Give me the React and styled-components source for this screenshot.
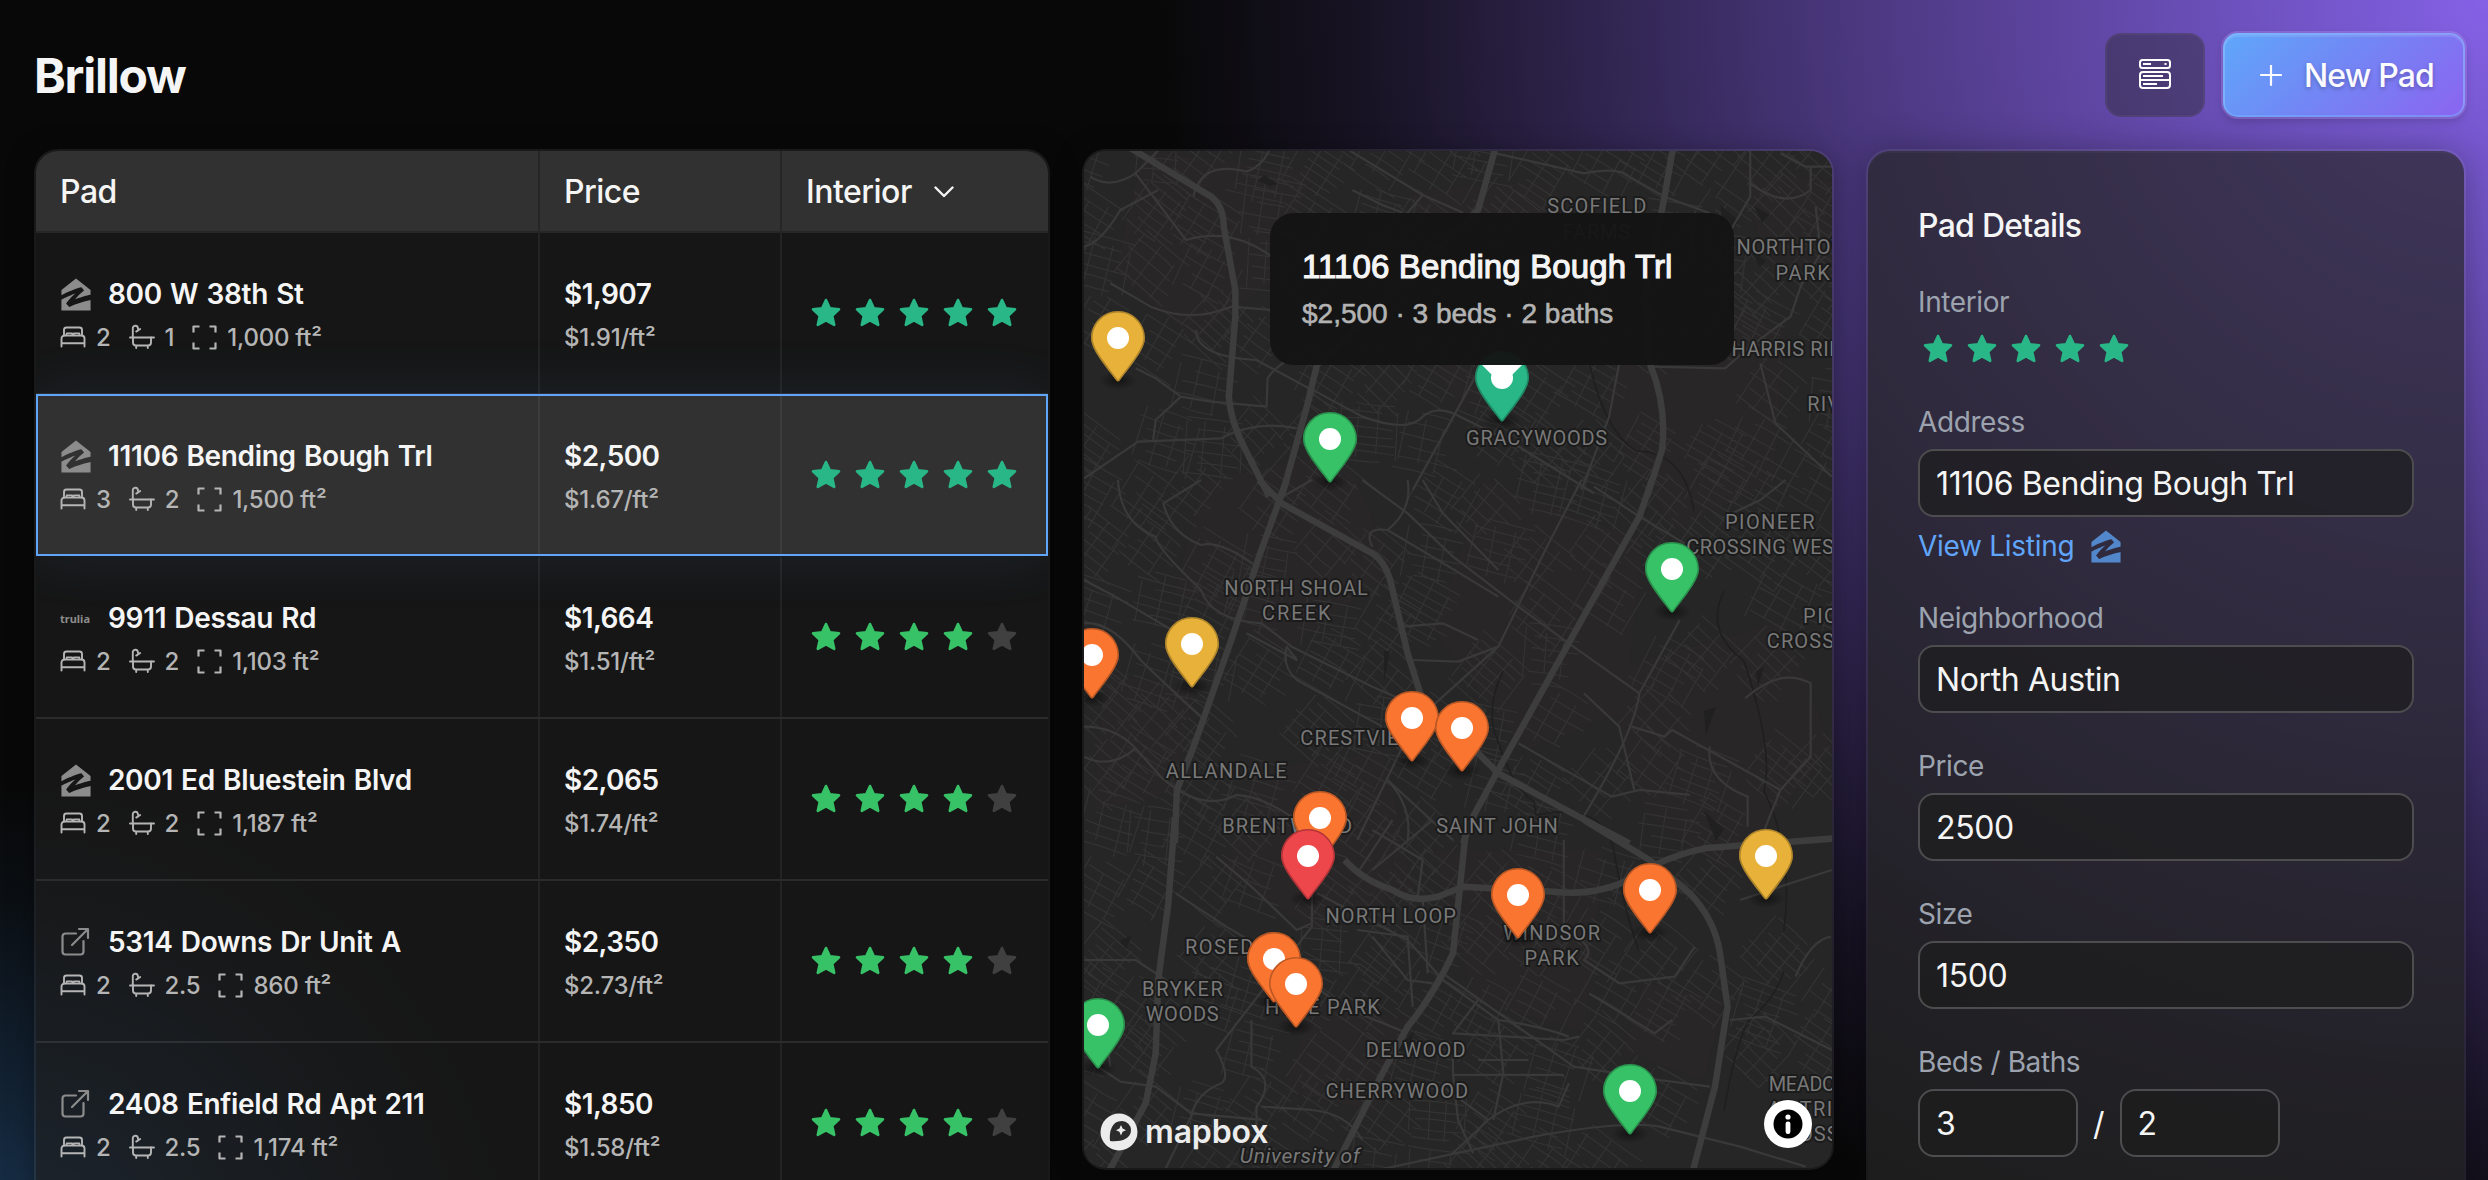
import React from "react";
import styled, { createGlobalStyle } from "styled-components";
import { SiZillow } from "react-icons/si";

const GlobalStyle = createGlobalStyle`
  * { box-sizing: border-box; }
  body {
    margin: 0;
    background: #070707;
    color: #f5f5f5;
    font-family: Inter, "Noto Sans", sans-serif;
    -webkit-font-smoothing: antialiased;
  }
`;

const Page = styled.div`
  height: 1180px;
  overflow: hidden;
  padding: 0 24px 0 36px;
  background:
    radial-gradient(circle at 100% 0, rgba(139, 102, 242, 0.95) 0, rgba(139, 102, 242, 0.5) 640px, rgba(139, 102, 242, 0.12) 1120px, transparent 1330px),
    radial-gradient(circle at 0 1300px, rgba(56, 130, 210, 0.4) 0, rgba(56, 130, 210, 0.22) 200px, rgba(56, 130, 210, 0.06) 400px, transparent 520px),
    #080808;
`;

const Header = styled.header`
  height: 151px;
  display: flex;
  align-items: flex-start;
  justify-content: space-between;
  padding: 33px 0 0;
`;

const Brand = styled.h1`
  margin: 0 0 0 -2px;
  font-size: 48px;
  line-height: 86px;
  font-weight: 700;
  letter-spacing: -0.026em;
`;

const Actions = styled.div`
  display: flex;
  gap: 18px;
  margin-right: -1px;
`;

const IconButton = styled.button`
  width: 100px;
  height: 84px;
  display: grid;
  place-items: center;
  padding: 0;
  border: 2px solid rgba(255, 255, 255, 0.04);
  border-radius: 16px;
  background: rgba(38, 38, 38, 0.42);
  color: #fff;
`;

const PrimaryButton = styled.button`
  width: 242px;
  height: 84px;
  display: flex;
  align-items: center;
  gap: 22px;
  padding: 2px 0 0 37px;
  border: 0;
  border-radius: 15px;
  color: #fafaff;
  background: linear-gradient(135deg, #60a5fa 4%, #7484f4 50%, #8b64f0 100%);
  box-shadow:
    0 0 0 2px rgba(190, 160, 255, 0.3),
    inset 0 2px 0 2px rgba(255, 255, 255, 0.1),
    inset 0 0 0 2px rgba(120, 180, 255, 0.5),
    0 4px 10px rgba(0, 0, 0, 0.2);
  font: 500 32px/1 Inter, sans-serif;
  letter-spacing: -0.026em;
  text-shadow: 0 2px 4px rgba(0, 0, 0, 0.25);
`;

const Columns = styled.main`
  display: grid;
  grid-template-columns: 1012px 748px 596px;
  gap: 36px;
  align-items: start;
`;

const panelRing = `
  box-shadow:
    0 0 0 2px rgba(255, 255, 255, 0.08),
    0 4px 30px rgba(0, 0, 0, 0.35);
`;

const Table = styled.section`
  height: 1100px;
  overflow: hidden;
  border-radius: 22px 22px 0 0;
  background: rgba(30, 30, 30, 0.66);
  ${panelRing}
`;

const rowGrid = `
  display: grid;
  grid-template-columns: 504px 242px 266px;
`;

const TableHead = styled.div`
  ${rowGrid}
  height: 82px;
  background: #313131;
  border-bottom: 2px solid #262626;
`;

const HeadCell = styled.div`
  display: flex;
  align-items: center;
  gap: 22px;
  padding: 1px 0 0 24px;
  font-size: 32px;
  font-weight: 500;
  letter-spacing: -0.016em;
  border-right: ${(p) => (p.$last ? "0" : "2px solid #262626")};
`;

const Row = styled.div`
  ${rowGrid}
  position: relative;
  height: 162px;
  border-bottom: 2px solid rgba(255, 255, 255, 0.09);
  ${(p) =>
    p.$selected &&
    `
    margin: -1px 0 1px;
    background: #313131;
    border-bottom: 0;
    outline: 2px solid #60a5fa;
    outline-offset: -2px;
    box-shadow: 0 0 60px rgba(96, 165, 250, 0.1);
  `}
`;

const Cell = styled.div`
  display: flex;
  flex-direction: column;
  justify-content: center;
  padding: ${(p) => (p.$last ? "0 0 0 24px" : "4px 0 0 24px")};
  border-right: ${(p) => (p.$last ? "0" : "2px solid rgba(255, 255, 255, 0.06)")};
`;

const Primary = styled.div`
  display: flex;
  align-items: center;
  gap: 16px;
  height: 44px;
  font-size: 28px;
  font-weight: 600;
  letter-spacing: ${(p) => (p.$figure ? "-0.02em" : "-0.012em")};
  word-spacing: 1.5px;
  white-space: nowrap;
`;

const Secondary = styled.div`
  display: flex;
  align-items: center;
  height: 42px;
  font-size: 24px;
  font-weight: 500;
  letter-spacing: -0.01em;
  color: #b5b5b5;
  white-space: nowrap;
`;

const Stat = styled.span`
  display: flex;
  align-items: center;
  gap: 10px;
  margin-right: 18px;
`;

const Source = styled.span`
  width: 32px;
  display: flex;
  align-items: center;
  color: ${(p) => (p.$accent ? "#5288cb" : "#8c8c8c")};
`;

const TruliaMark = styled.span`
  font: 700 11px/1 "Noto Sans", sans-serif;
  letter-spacing: 0;
`;

const Stars = styled.div`
  display: flex;
  align-items: center;
  gap: 14px;
  padding-left: ${(p) => p.$inset || 0}px;
  height: 40px;
`;

const MapPanel = styled.section`
  position: relative;
  height: 1017px;
  overflow: hidden;
  border-radius: 22px;
  background: #262626;
  ${panelRing}
`;

const MapCanvas = styled.svg`
  display: block;
`;

const Marker = styled.svg`
  position: absolute;
  width: 54px;
  height: 82px;
  overflow: visible;
`;

const Popup = styled.div`
  position: absolute;
  left: 186px;
  top: 62px;
  width: 464px;
  height: 152px;
  padding: 31px 32px;
  border-radius: 24px;
  background: rgba(20, 20, 20, 0.96);
  font-family: "Liberation Sans", Arial, sans-serif;
  &::after {
    content: "";
    position: absolute;
    top: 152px;
    left: 212px;
    border: 20px solid transparent;
    border-top-color: #fff;
    border-bottom: 0;
  }
`;

const PopupTitle = styled.div`
  font-size: 33px;
  line-height: 46px;
  white-space: nowrap;
  letter-spacing: 0.13px;
  -webkit-text-stroke: 1.1px #f5f5f5;
`;

const PopupMeta = styled.div`
  font-size: 28px;
  line-height: 48px;
  white-space: nowrap;
  color: #b3b3b3;
  -webkit-text-stroke: 0.6px #b3b3b3;
`;

const MapLogo = styled.div`
  position: absolute;
  left: 16px;
  bottom: 14px;
  display: flex;
  align-items: center;
  gap: 7px;
  color: #ececec;
  font: 600 32px/44px Inter, sans-serif;
  letter-spacing: -0.005em;
`;

const InfoButton = styled.div`
  position: absolute;
  right: 20px;
  bottom: 20px;
  width: 48px;
  height: 48px;
  border-radius: 50%;
  background: #fff;
  display: grid;
  place-items: center;
`;

const Details = styled.section`
  height: 1100px;
  display: flex;
  flex-direction: column;
  gap: 32px;
  padding: 50px;
  border-radius: 22px 22px 0 0;
  background: rgba(38, 38, 38, 0.7);
  box-shadow:
    0 0 0 2px rgba(255, 255, 255, 0.08),
    inset 0 2px 0 rgba(255, 255, 255, 0.03),
    0 0 36px rgba(0, 0, 0, 0.3);
`;

const DetailsTitle = styled.h2`
  margin: 0;
  padding-top: 1px;
  font-size: 32px;
  line-height: 47px;
  font-weight: 500;
  letter-spacing: -0.023em;
`;

const Field = styled.div`
  display: flex;
  flex-direction: column;
  gap: 8px;
`;

const Label = styled.label`
  font-size: 28px;
  line-height: 42px;
  margin-bottom: -2px;
  letter-spacing: -0.014em;
  color: #9ca3af;
`;

const Input = styled.input`
  width: ${(p) => (p.$small ? "160px" : "100%")};
  height: 68px;
  padding: 1px 16px 0;
  border: 2px solid #4d4d4f;
  border-radius: 16px;
  outline: 0;
  background: rgba(28, 28, 28, 0.7);
  color: #f5f5f5;
  font: 400 32px Inter, sans-serif;
  letter-spacing: -0.012em;
`;

const Split = styled.div`
  display: flex;
  align-items: center;
  gap: 15px;
  font-size: 32px;
`;

const Link = styled.a`
  display: flex;
  align-items: center;
  gap: 16px;
  height: 42px;
  margin-bottom: -2px;
  font-size: 28px;
  letter-spacing: -0.01em;
  color: #60a5fa;
`;

const Star = ({ color }) => (
  <svg width="30" height="30" viewBox="0 0 30 30">
    <path
      d="M15 2 18.800 10.400 28 11.400 21.200 17.700 23.200 26.900 15 22.300 6.800 26.900 8.800 17.700 2 11.400 11.200 10.400Z"
      fill={color}
      stroke={color}
      strokeWidth="2.6"
      strokeLinejoin="round"
    />
  </svg>
);

const Rating = ({ value, inset }) => {
  const color = value === 5 ? "#29b787" : "#38c267";
  return (
    <Stars $inset={inset}>
      {[1, 2, 3, 4, 5].map((n) => (
        <Star key={n} color={n <= value ? color : "#404040"} />
      ))}
    </Stars>
  );
};

const lineIcon = { fill: "none", stroke: "currentColor", strokeWidth: 1.9, strokeLinecap: "round", strokeLinejoin: "round" };

const BedIcon = () => (
  <svg width="26" height="24" viewBox="0 0 26 24" {...lineIcon}>
    <path d="M4 10.5V5a2.5 2.5 0 0 1 2.5-2.5h13A2.5 2.5 0 0 1 22 5v5.5" />
    <path d="M6.6 10V8.2h5.6V10M13.8 10V8.2h5.6V10" strokeWidth="1.6" />
    <path d="M1.5 21.5v-8A3 3 0 0 1 4.500 10.500h17a3 3 0 0 1 3 3v8M1.500 18.200h23" />
  </svg>
);

const BathIcon = () => (
  <svg width="26" height="26" viewBox="0 0 26 26" {...lineIcon}>
    <path d="M1 13.500h24M3.800 13.500V4.500a2.500 2.500 0 0 1 5-.5l.6 2M7.200 7.600l4-2.600" />
    <path d="M4 13.500v5a3 3 0 0 0 3 3h12a3 3 0 0 0 3-3v-5M7.200 21.800V24M18.800 21.800V24" />
  </svg>
);

const AreaIcon = () => (
  <svg width="25" height="25" viewBox="0 0 25 25" {...lineIcon} strokeLinecap="butt" strokeWidth="2.2">
    <path d="M1.500 7.500v-6h6M17.500 1.500h6v6M23.500 17.500v6h-6M7.500 23.500h-6v-6" />
  </svg>
);

const ExternalIcon = () => (
  <svg width="32" height="30" viewBox="0 0 32 30" {...lineIcon} strokeWidth="2.2">
    <path d="M16 6.500H5.500a3 3 0 0 0-3 3v15a3 3 0 0 0 3 3h15a3 3 0 0 0 3-3V14M12 18 27.500 2.500M19 2h9v9" />
  </svg>
);

const SourceIcon = ({ source }) => {
  if (source === "zillow") return <SiZillow size={33} />;
  if (source === "trulia") return <TruliaMark>trulia</TruliaMark>;
  return <ExternalIcon />;
};

const pads = [
  { address: "800 W 38th St", source: "zillow", beds: "2", baths: "1", area: "1,000", price: "$1,907", rate: "$1.91", rating: 5 },
  { address: "11106 Bending Bough Trl", source: "zillow", beds: "3", baths: "2", area: "1,500", price: "$2,500", rate: "$1.67", rating: 5, selected: true },
  { address: "9911 Dessau Rd", source: "trulia", beds: "2", baths: "2", area: "1,103", price: "$1,664", rate: "$1.51", rating: 4 },
  { address: "2001 Ed Bluestein Blvd", source: "zillow", beds: "2", baths: "2", area: "1,187", price: "$2,065", rate: "$1.74", rating: 4 },
  { address: "5314 Downs Dr Unit A", source: "link", beds: "2", baths: "2.5", area: "860", price: "$2,350", rate: "$2.73", rating: 4 },
  { address: "2408 Enfield Rd Apt 211", source: "link", beds: "2", baths: "2.5", area: "1,174", price: "$1,850", rate: "$1.58", rating: 4 },
];

const PadRow = ({ pad }) => (
  <Row $selected={pad.selected}>
    <Cell>
      <Primary>
        <Source><SourceIcon source={pad.source} /></Source>
        {pad.address}
      </Primary>
      <Secondary>
        <Stat><BedIcon />{pad.beds}</Stat>
        <Stat><BathIcon />{pad.baths}</Stat>
        <Stat><AreaIcon />{pad.area} ft²</Stat>
      </Secondary>
    </Cell>
    <Cell>
      <Primary $figure>{pad.price}</Primary>
      <Secondary>{pad.rate}/ft²</Secondary>
    </Cell>
    <Cell $last>
      <Rating value={pad.rating} inset={5} />
    </Cell>
  </Row>
);

/* Map artwork: three bands of roads, each in its own survey units. */
const bands = [
  {
    shift: -21,
    major: [
      "M135 50 300 200Q325 230 325 290L348 480V560L335 800Q340 880 365 950L415 1100",
      "M865 50 830 240 700 430 510 705 490 830 440 1100",
      "M1217 50 1200 200 1160 500 1172 705Q1205 830 1195 960L1165 1100",
    ],
    minor: [
      "M575 62 720 195 800 248", "M865 70 1040 130Q1110 110 1130 140L1200 200 1290 250",
      "M48 1045 155 935 320 925Q390 870 470 895", "M150 715 190 745 240 800 300 815 410 830 412 745Q430 700 510 640",
      "M490 770 600 860Q690 910 720 860 750 820 800 865L900 940 1060 1090",
      "M1370 62V200L1320 330 1290 420", "M1370 160Q1440 240 1490 180V110", "M1430 70 1480 110H1532",
      "M1390 700 1420 880 1532 1040", "M1170 710 1320 715 1370 650 1450 560 1470 470 1510 370 1500 230",
      "M195 62 150 130 250 330Q340 290 420 380", "M48 350Q80 340 120 240L195 180", "M265 200Q280 90 370 125 400 110 415 62",
      "M100 460 180 530Q260 580 340 530L420 540", "M270 600Q270 680 390 690L500 780", "M150 130Q100 180 60 140",
      "M835 710 770 890 700 1080", "M1110 700 1090 860 1035 1080", "M580 180 640 225 680 248", "M720 195 690 248",
      "M185 930 190 870 240 800",
    ],
  },
  {
    shift: 329,
    major: [
      "M450 0 395 230 340 480 270 780 232 930 228 1090",
      "M395 0 440 70 620 220Q650 250 660 330L690 520 715 640 760 740 830 820 870 880 980 970 1130 1090",
      "M1175 0 1150 110 1050 380 870 870 820 1010 800 1090",
    ],
    minor: [
      "M1035 0 960 220 870 500 745 670 680 800 590 1080", "M600 0 690 100 780 230 910 380 1010 490 1150 640",
      "M1060 20 1150 110 1240 190", "M115 0Q120 130 190 170 190 200 280 330 300 420 400 430L460 500 620 620 740 700",
      "M280 0 205 70Q220 160 280 195 320 180 390 260", "M1230 420 1150 640Q1140 760 1035 1020",
      "M48 830Q100 870 150 805L200 890Q280 1000 350 945 420 950 520 1080", "M1135 740 1200 770 1215 750 1430 930 1390 1080",
      "M1360 655Q1430 560 1490 610V830L1430 930", "M1290 800Q1280 900 1365 950V1040", "M650 150 750 240 870 350",
      "M690 0Q700 90 650 150 600 140 620 200", "M650 900Q700 980 690 1080", "M910 790 1095 950 1150 930 1250 945",
      "M370 460 470 540 450 500Q440 560 470 600L640 740", "M48 300 110 350 300 520", "M48 740Q110 740 150 805", "M650 900 780 1080",
      "M680 440 760 430 830 480", "M700 540 790 545 870 500", "M48 430Q100 420 160 540 200 600 280 710",
      "M1440 0 1390 60 1320 110", "M500 0 430 60", "M720 0 760 100 870 270", "M1040 640 1110 740 1140 930",
    ],
  },
  {
    shift: 669,
    major: [
      "M228 -10 215 250 195 480 190 700 170 850 95 1060",
      "M805 40 780 400Q740 530 690 620L640 760 540 1060",
      "M1040 0 1170 120 1250 220Q1300 300 1310 400L1325 560 1300 800 1255 1060",
      "M1540 55 1280 85Q1200 110 1140 170 1070 230 980 215L800 200 750 230Q700 250 660 210 600 180 565 120",
    ],
    minor: [
      "M75 740 120 785 190 800 260 880 400 900", "M500 200V320L310 690Q340 770 320 790 270 820 260 890L210 1045",
      "M510 220 690 360 760 480 870 600Q960 620 1010 650", "M310 110 380 200 470 330 500 310", "M760 460 1020 740 1190 780 1290 800",
      "M230 220 330 320 420 400 560 560 690 640", "M400 860 500 870Q570 880 600 960",
      "M600 1060 940 950Q1120 900 1190 920L1350 980 1480 1040", "M780 700V760L790 900 820 1000",
      "M870 600 880 760 860 900", "M850 900Q920 820 990 860L1010 790", "M1330 600 1400 590 1532 690",
      "M1350 240 1450 190 1532 150", "M48 590Q90 600 100 740", "M740 490 690 480 620 350", "M720 240 730 460",
      "M830 540 780 640 1000 660 1030 650", "M1000 60V330Q1070 380 1040 420L1110 490 1220 470 1260 380",
      "M740 0 620 150M660 0 590 160", "M380 600V740Q430 780 390 860V940", "M780 765H1000M830 720H930",
      "M1215 600 1180 640 1050 520", "M590 330 690 350 700 560", "M620 30 720 120 710 230", "M48 420 150 420 230 500",
      "M780 1000 850 900 760 800", "M1530 350Q1490 360 1460 470",
    ],
  },
];

const label = (band, text, x, y, width, italic) => ({ band, text, x, y, width, italic });
const labels = [
  label(0, "SCOFIELD", 967, 248, 197), label(0, "FARMS", 998, 326, 134), label(0, "NORTHTOWN", 1343, 373, 252),
  label(0, "PARK", 1420, 449, 108), label(0, "HARRIS RIDGE", 1333, 677, 272), label(0, "RIVER", 1483, 842, 118),
  label(0, "GRACYWOODS", 806, 945, 280),
  label(1, "PIONEER", 1320, 146, 178), label(1, "CROSSING WEST", 1243, 221, 318), label(1, "NORTH SHOAL", 326, 344, 285),
  label(1, "CREEK", 401, 419, 136), label(1, "PIONEER", 1475, 429, 178), label(1, "CROSSING", 1403, 503, 206),
  label(1, "CRESTVIEW", 477, 795, 232), label(1, "ALLANDALE", 210, 895, 240), label(1, "BRENTWOOD", 322, 1059, 258),
  label(1, "SAINT JOHN", 747, 1060, 241),
  label(2, "NORTH LOOP", 527, 310, 259), label(2, "ROSEDALE", 248, 401, 214), label(2, "WINDSOR", 880, 360, 192),
  label(2, "PARK", 922, 436, 108), label(2, "BRYKER", 163, 527, 160), label(2, "WOODS", 170, 603, 145),
  label(2, "HYDE PARK", 407, 583, 228), label(2, "DELWOOD", 607, 710, 198), label(2, "CHERRYWOOD", 527, 834, 283),
  label(2, "MEADOWS", 1407, 813, 190), label(2, "AT TRINITY", 1405, 887, 225), label(2, "CROSSING", 1412, 962, 206),
  label(2, "University of", 357, 1028, 238, true),
];

/* Deterministic street grids that fill the space between the roads. */
const buildStreets = () => {
  let seed = 41;
  const rnd = () => ((seed = (seed * 16807) % 2147483647) / 2147483647);
  let d = "";
  for (let gy = 0; gy < 19; gy++) {
    for (let gx = 0; gx < 14; gx++) {
      const cx = gx * 56 + rnd() * 26;
      const cy = gy * 56 + rnd() * 26;
      const east = cx > 560 && cy > 430;
      if (rnd() < (east ? 0.5 : 0.12)) continue;
      const a = (rnd() < 0.75 ? 0.5 : 0.1) + rnd() * 0.28;
      const c = Math.cos(a);
      const s = Math.sin(a);
      const put = (u, v) => `${(cx + u * c - v * s).toFixed(1)} ${(cy + u * s + v * c).toFixed(1)}`;
      const gap = 8 + rnd() * 5;
      for (let v = -30; v < 30; v += gap) {
        const l = -34 + rnd() * 22;
        const r = 34 - rnd() * 22;
        d += `M${put(l, v)}Q${put(0, v + rnd() * 5 - 2.5)} ${put(r, v)}`;
      }
      for (let u = -28; u < 30; u += 17 + rnd() * 6) {
        d += `M${put(u, -30 + rnd() * 12)}L${put(u + rnd() * 4, 30 - rnd() * 12)}`;
      }
    }
  }
  return d;
};
const streets = buildStreets();

const areas = [
  "M60 0 230 20 190 130 110 190 30 120Z", "M330 40 470 30 520 180 380 260 300 150Z", "M560 120 700 180 690 330 590 380 520 260Z",
  "M120 330 260 300 310 420 200 500 90 440Z", "M400 330 560 390 540 560 440 600 350 480Z", "M20 520 110 540 90 640 10 660Z",
  "M520 520 700 470 748 600 640 720 560 660Z", "M170 620 300 600 330 740 230 780 140 720Z", "M350 700 520 700 500 880 390 850Z",
  "M560 830 640 850 620 930 540 900Z", "M230 850 330 870 290 960 200 940Z", "M660 20 748 30V120L680 110Z",
];

const MapArt = () => (
  <MapCanvas width="748" height="1017" viewBox="0 0 748 1017">
    <rect width="748" height="1017" fill="#262626" />
    {areas.map((d) => <path key={d} d={d} fill="#292627" />)}
    <path d={streets} fill="none" stroke="#333333" strokeWidth="1.2" />
    <g fill="none" stroke="#1f1f1f" strokeWidth="1.6">
      <path d="M505 210Q520 280 552 300 600 300 610 360" />
      <path d="M419 520Q400 560 414 590 430 640 450 650L452 664Q520 650 530 700 540 760 555 800" />
      <path d="M640 440Q620 480 660 510 690 600 680 640 710 700 700 780M640 960Q650 900 664 870 690 850 700 820" />
    </g>
    <g fill="#202020">
      <path d="M174 30 180 24 194 33 186 35ZM636 54 655 70 650 76 638 66ZM670 55 686 64 678 72ZM666 98 682 110 676 116ZM620 660 640 678 632 690ZM36 790 48 784 42 798Z" />
      <path d="M300 500 306 500 300 530ZM672 520 680 516 674 536ZM620 560 632 556 622 584ZM310 900 330 880 326 900Z" />
    </g>
    {bands.map((band) => (
      <g key={band.shift} transform={`translate(-24 ${band.shift}) scale(.5038 .3333)`} fill="none" strokeLinejoin="round">
        {band.minor.map((d) => <path key={d} d={d} vectorEffect="non-scaling-stroke" stroke="#393939" strokeWidth="2.2" />)}
        {band.major.map((d) => <path key={d} d={d} vectorEffect="non-scaling-stroke" stroke="#3d3d3d" strokeWidth="6.5" />)}
      </g>
    ))}
    <g fontFamily="Roboto, sans-serif" fontSize="19.5" fill="#787878" stroke="#1b1b1b" strokeWidth="4" strokeLinejoin="round" paintOrder="stroke">
      {labels.map((l) => (
        <text
          key={l.text + l.x}
          x={l.x * 0.5038 - 24}
          y={l.y / 3 + bands[l.band].shift}
          textLength={l.width * 0.5038}
          fontStyle={l.italic ? "italic" : "normal"}
          fontSize={l.italic ? 21 : 20}
        >
          {l.text}
        </text>
      ))}
    </g>
  </MapCanvas>
);

const tint = { yellow: "#e8b139", green: "#38c267", teal: "#29b787", orange: "#f97530", red: "#ed464b" };

const pins = [
  [34, 231, "yellow"], [418, 271, "teal"], [246, 332, "green"], [588, 462, "green"], [108, 537, "yellow"],
  [8, 548, "orange"], [328, 611, "orange"], [378, 621, "orange"], [235.5, 711, "orange"], [224, 749, "red"],
  [682, 749, "yellow"], [566, 783, "orange"], [433.5, 788, "orange"], [190, 852, "orange"], [212, 877, "orange"],
  [14, 918, "green"], [546, 984, "green"],
];

const pinShape =
  "M27 13.500C27 19.070 20.250 27 14.400 34.700C13.900 35.400 13.100 35.400 12.600 34.700C6.750 27 0 19.220 0 13.500C0 6.040 6.040 0 13.500 0C20.960 0 27 6.040 27 13.500Z";

const Pin = ({ x, y, color }) => (
  <Marker viewBox="0 0 27 41" style={{ left: x - 27, top: y - 71.5 }}>
    <ellipse cx="13.500" cy="34.800" rx="9.500" ry="4.700" fill="url(#pinShadow)" />
    <path d={pinShape} fill={color} />
    <path d={pinShape} fill="none" stroke="#000" strokeOpacity="0.25" strokeWidth="1.6" clipPath="url(#pinClip)" />
    <circle cx="13.500" cy="13.500" r="5.500" fill="#fff" />
  </Marker>
);

const PinDefs = () => (
  <defs>
    <radialGradient id="pinShadow">
      <stop offset="0" stopColor="#000" stopOpacity="0.5" />
      <stop offset="1" stopColor="#000" stopOpacity="0" />
    </radialGradient>
    <clipPath id="pinClip"><path d={pinShape} /></clipPath>
  </defs>
);

const PadMap = () => (
  <MapPanel>
    <MapArt />
    <Marker><PinDefs /></Marker>
    {pins.map(([x, y, c]) => <Pin key={`${x}-${y}`} x={x} y={y} color={tint[c]} />)}
    <MapLogo>
      <svg width="38" height="38" viewBox="0 0 38 38">
        <circle cx="19" cy="19" r="18.500" fill="#ececec" />
        <path d="M10 28C9 19 11.500 8 22 8a9 9 0 0 1 9 9C31 27 19 29 10 28Z" fill="#2b2b2b" />
        <path d="m21 12 1.600 3.600L26 17.200l-3.400 1.600L21 22.400l-1.600-3.600L16 17.200l3.400-1.600Z" fill="#ececec" />
      </svg>
      mapbox
    </MapLogo>
    <InfoButton>
      <svg width="30" height="30" viewBox="0 0 30 30">
        <circle cx="15" cy="15" r="14.500" fill="#000" />
        <circle cx="15" cy="8" r="2.600" fill="#fff" />
        <rect x="12.600" y="12.500" width="4.800" height="12.500" rx="2.200" fill="#fff" />
      </svg>
    </InfoButton>
    <Popup>
      <PopupTitle>11106 Bending Bough Trl</PopupTitle>
      <PopupMeta>$2,500 · 3 beds · 2 baths</PopupMeta>
    </Popup>
  </MapPanel>
);

const TextField = ({ label: caption, value, children }) => (
  <Field>
    <Label>{caption}</Label>
    <Input defaultValue={value} />
    {children}
  </Field>
);

export default function App() {
  return (
    <Page>
      <GlobalStyle />
      <Header>
        <Brand>Brillow</Brand>
        <Actions>
          <IconButton aria-label="Layout">
            <svg width="32" height="32" viewBox="0 0 32 32" fill="none" stroke="#fff" strokeWidth="2">
              <rect x="1" y="1" width="30" height="8" rx="2.500" />
              <rect x="1" y="13" width="30" height="16" rx="3" />
              <path d="M4 5h8M25.500 5h2M4 17h20M1 21h30M4 25h14" />
            </svg>
          </IconButton>
          <PrimaryButton>
            <svg width="22" height="22" viewBox="0 0 22 22" fill="none" stroke="currentColor" strokeWidth="2.200" strokeLinecap="round">
              <path d="M11 0v20M1 10h20" />
            </svg>
            New Pad
          </PrimaryButton>
        </Actions>
      </Header>
      <Columns>
        <Table>
          <TableHead>
            <HeadCell>Pad</HeadCell>
            <HeadCell>Price</HeadCell>
            <HeadCell $last>
              Interior
              <svg width="20" height="12" viewBox="0 0 20 12" fill="none" stroke="currentColor" strokeWidth="2.400" strokeLinecap="round" strokeLinejoin="round">
                <path d="m1.500 1.500 8.500 8.500 8.500-8.500" />
              </svg>
            </HeadCell>
          </TableHead>
          {pads.map((pad) => <PadRow key={pad.address} pad={pad} />)}
        </Table>
        <PadMap />
        <Details>
          <DetailsTitle>Pad Details</DetailsTitle>
          <Field>
            <Label>Interior</Label>
            <Rating value={5} inset={5} />
          </Field>
          <TextField label="Address" value="11106 Bending Bough Trl">
            <Link>
              View Listing
              <Source $accent><SiZillow size={33} /></Source>
            </Link>
          </TextField>
          <TextField label="Neighborhood" value="North Austin" />
          <TextField label="Price" value="2500" />
          <TextField label="Size" value="1500" />
          <Field>
            <Label>Beds / Baths</Label>
            <Split>
              <Input $small defaultValue="3" />
              /
              <Input $small defaultValue="2" />
            </Split>
          </Field>
        </Details>
      </Columns>
    </Page>
  );
}
